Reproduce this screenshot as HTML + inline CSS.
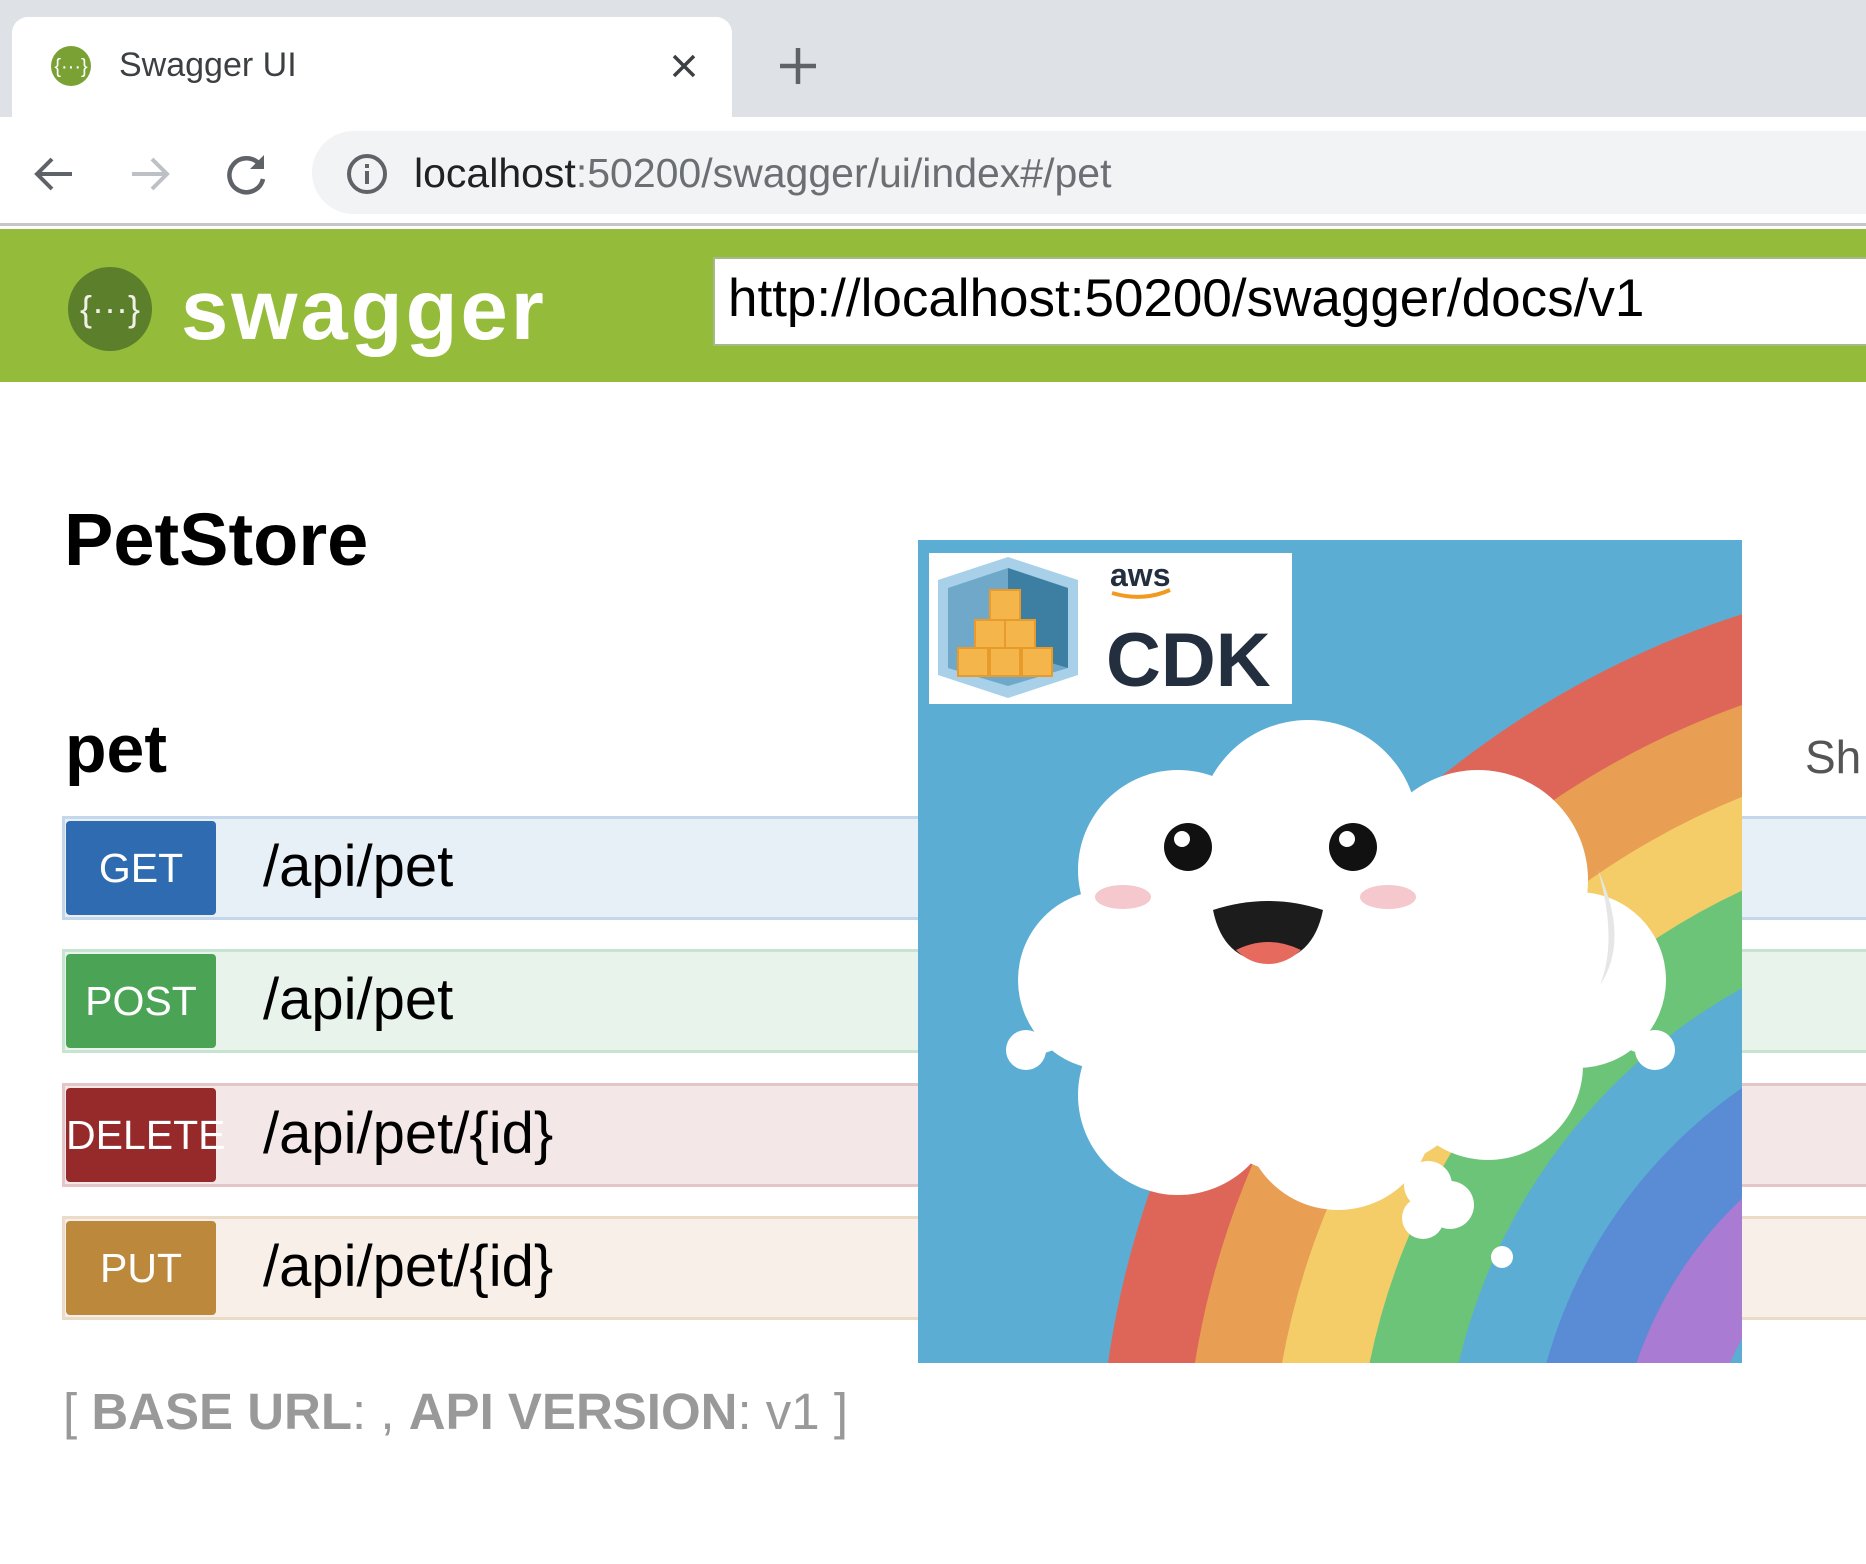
<!DOCTYPE html>
<html><head><meta charset="utf-8"><style>
*{margin:0;padding:0;box-sizing:border-box}
html,body{width:1866px;height:1564px;overflow:hidden}
body{position:relative;background:#fff;font-family:"Liberation Sans",Arial,sans-serif}
.a{position:absolute}
.row{position:absolute;left:62px;width:1804px;height:104px;border:3px solid;border-right:none}
.badge{position:absolute;left:1px;top:2px;width:150px;height:94px;border-radius:4px;color:#fff;font-size:41px;text-align:center;line-height:94px;overflow:visible;white-space:nowrap}
.path{position:absolute;left:198px;top:0;line-height:96px;font-size:58px;color:#000}
</style></head><body>
<div class="a" style="left:0;top:0;width:1866px;height:117px;background:#dee1e6"></div>
<div class="a" style="left:12px;top:17px;width:720px;height:100px;background:#fff;border-radius:16px 16px 0 0"></div>
<svg class="a" style="left:50px;top:45px" width="42" height="42" viewBox="0 0 42 42"><circle cx="21" cy="21" r="20" fill="#7aa133"/><text x="21" y="28" font-size="20" fill="#fff" text-anchor="middle" font-family="Liberation Sans">{···}</text></svg>
<div class="a" style="left:119px;top:46px;font-size:34px;color:#3c4043">Swagger UI</div>
<svg class="a" style="left:670px;top:52px" width="28" height="28" viewBox="0 0 28 28"><path d="M4 4L24 24M24 4L4 24" stroke="#3c4043" stroke-width="3.5"/></svg>
<svg class="a" style="left:778px;top:46px" width="40" height="40" viewBox="0 0 40 40"><path d="M20 2V38M2 20H38" stroke="#5f6368" stroke-width="4.5"/></svg>
<div class="a" style="left:0;top:117px;width:1866px;height:109px;background:#fff;border-bottom:3px solid #c4c6ca"></div>
<svg class="a" style="left:32px;top:152px" width="44" height="44" viewBox="0 0 44 44"><path d="M40 22H6M20 7L5 22L20 37" stroke="#5f6368" stroke-width="4" fill="none"/></svg>
<svg class="a" style="left:128px;top:152px" width="44" height="44" viewBox="0 0 44 44"><path d="M4 22H38M24 7L39 22L24 37" stroke="#bdc1c6" stroke-width="4" fill="none"/></svg>
<svg class="a" style="left:224px;top:151px" width="46" height="46" viewBox="0 0 46 46"><path d="M36 14A17 17 0 1 0 39 28" stroke="#5f6368" stroke-width="4.5" fill="none"/><path d="M40 4V18H26Z" fill="#5f6368"/></svg>
<div class="a" style="left:312px;top:131px;width:1554px;height:83px;background:#f1f3f4;border-radius:42px 0 0 42px"></div>
<svg class="a" style="left:345px;top:152px" width="44" height="44" viewBox="0 0 44 44"><circle cx="22" cy="22" r="18" stroke="#5f6368" stroke-width="4" fill="none"/><rect x="20" y="19" width="4" height="13" fill="#5f6368"/><rect x="20" y="12" width="4" height="4" fill="#5f6368"/></svg>
<div class="a" style="left:414px;top:150px;font-size:41px;color:#202124;white-space:nowrap">localhost<span style="color:#6b6f73">:50200/swagger/ui/index#/pet</span></div>
<div class="a" style="left:0;top:229px;width:1866px;height:153px;background:#95bb3b"></div>
<svg class="a" style="left:67px;top:266px" width="86" height="86" viewBox="0 0 86 86"><circle cx="43" cy="43" r="42" fill="#5b7f2a"/><text x="43" y="55" font-size="36" fill="#f0f0e8" text-anchor="middle" font-family="Liberation Sans">{···}</text></svg>
<div class="a" style="left:181px;top:262px;font-size:85px;font-weight:bold;color:#fff;letter-spacing:3px">swagger</div>
<div class="a" style="left:713px;top:257px;width:1153px;height:89px;background:#fff;border:2px solid #a5b98a;border-right:none"></div>
<div class="a" style="left:728px;top:268px;font-size:53px;color:#000;white-space:nowrap">http://localhost:50200/swagger/docs/v1</div>
<div class="a" style="left:64px;top:497px;font-size:74px;font-weight:bold;color:#000">PetStore</div>
<div class="a" style="left:65px;top:710px;font-size:68px;font-weight:bold;color:#000">pet</div>
<div class="a" style="left:1805px;top:730px;font-size:46px;color:#555">Sh</div>

<div class="row" style="top:816px;background:#e7eff7;border-color:#c5d7ea"><div class="badge" style="background:#2f6bb0">GET</div><div class="path">/api/pet</div></div>
<div class="row" style="top:949px;background:#e8f3ec;border-color:#c6e4d0"><div class="badge" style="background:#4ba356">POST</div><div class="path">/api/pet</div></div>
<div class="row" style="top:1083px;background:#f3e7e7;border-color:#e4c5c8"><div class="badge" style="background:#962a2a;text-align:left">DELETE</div><div class="path">/api/pet/{id}</div></div>
<div class="row" style="top:1216px;background:#f8f0e8;border-color:#eadcc8"><div class="badge" style="background:#bc883b">PUT</div><div class="path">/api/pet/{id}</div></div>

<div class="a" style="left:63px;top:1382px;font-size:51px;color:#999;white-space:nowrap">[ <b>BASE URL</b>: , <b>API VERSION</b>: v1 ]</div>

<svg class="a" style="left:918px;top:540px" width="824" height="823" viewBox="0 0 824 823">
<defs><clipPath id="c"><rect width="824" height="823"/></clipPath></defs>
<rect width="824" height="823" fill="#5badd4"/>
<g clip-path="url(#c)" fill="none" stroke-width="87">
<circle cx="1105" cy="955" r="881" stroke="#de6659"/>
<circle cx="1105" cy="955" r="795" stroke="#e89e53"/>
<circle cx="1105" cy="955" r="709" stroke="#f4cd68"/>
<circle cx="1105" cy="955" r="623" stroke="#6cc478"/>
<circle cx="1105" cy="955" r="451" stroke="#5a8bd5"/>
<circle cx="1105" cy="955" r="365" stroke="#a97bd2"/>
</g>
<path d="M112 510Q150 505 170 470M733 510Q700 505 680 470" stroke="#fff" stroke-width="12" fill="none"/>
<g fill="#fff">
<circle cx="390" cy="290" r="110"/><circle cx="260" cy="330" r="100"/><circle cx="560" cy="340" r="110"/>
<circle cx="660" cy="440" r="88"/><circle cx="190" cy="440" r="90"/>
<circle cx="260" cy="555" r="100"/><circle cx="420" cy="575" r="95"/><circle cx="570" cy="525" r="95"/>
<circle cx="410" cy="450" r="190"/>
<circle cx="108" cy="510" r="20"/><circle cx="737" cy="510" r="20"/>
<circle cx="510" cy="645" r="24"/><circle cx="532" cy="665" r="24"/><circle cx="505" cy="678" r="21"/><circle cx="584" cy="717" r="11"/>
</g>
<path d="M680 330Q712 400 682 445Q700 400 680 330Z" fill="#e6e6e6"/>
<circle cx="270" cy="307" r="24" fill="#111"/><circle cx="264" cy="299" r="8" fill="#fff"/>
<circle cx="435" cy="307" r="24" fill="#111"/><circle cx="429" cy="299" r="8" fill="#fff"/>
<ellipse cx="205" cy="357" rx="28" ry="12" fill="#f4c8cc"/><ellipse cx="470" cy="357" rx="28" ry="12" fill="#f4c8cc"/>
<path d="M295 370Q350 352 405 370Q395 420 350 422Q305 420 295 370Z" fill="#1c1c1c"/>
<path d="M318 410Q350 394 383 410Q368 424 350 424Q332 424 318 410Z" fill="#e66a5e"/>
<rect x="11" y="13" width="363" height="151" fill="#fff"/>
<polygon points="90,17 160,40 160,135 90,158 20,135 20,40" fill="#a8d0e8"/>
<polygon points="90,28 150,48 150,128 90,146 30,128 30,48" fill="#6fa8c8"/>
<polygon points="90,28 150,48 150,128 90,110" fill="#3d7ea3"/>
<g fill="#f4b64a" stroke="#e99a2c" stroke-width="2">
<rect x="72" y="50" width="30" height="30"/><rect x="57" y="80" width="30" height="30"/><rect x="87" y="80" width="30" height="30"/>
<rect x="40" y="108" width="30" height="28"/><rect x="72" y="108" width="30" height="28"/><rect x="104" y="108" width="30" height="28"/>
</g>
<text x="192" y="46" font-size="32" font-weight="bold" fill="#232f3e" font-family="Liberation Sans">aws</text>
<path d="M194 53Q225 62 252 50" stroke="#f29a1f" stroke-width="4" fill="none"/>
<text x="188" y="146" font-size="76" font-weight="bold" fill="#232f3e" font-family="Liberation Sans">CDK</text>
</svg>
</body></html>
